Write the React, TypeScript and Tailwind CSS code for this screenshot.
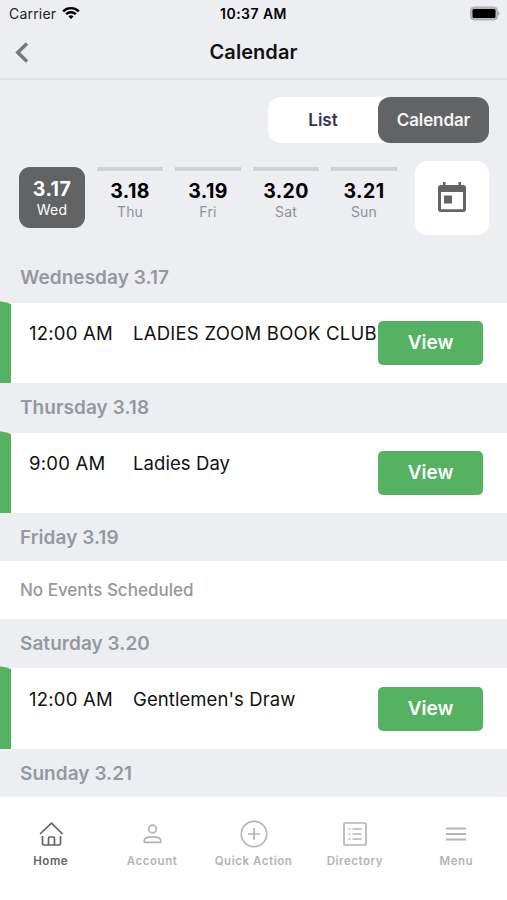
import React from "react";

const days = [
  { date: "3.18", day: "Thu" },
  { date: "3.19", day: "Fri" },
  { date: "3.20", day: "Sat" },
  { date: "3.21", day: "Sun" },
];

function SectionTitle({ children, className = "h-12 pt-[2px]" }: { children: React.ReactNode; className?: string }) {
  return (
    <h2 className={`flex items-center bg-[#edeef2] pl-5 text-[19px] font-semibold tracking-[0.05px] text-[#95989f] ${className}`}>
      {children}
    </h2>
  );
}

function EventRow({
  time,
  title,
  className = "h-[80px]",
  textClass = "pt-[18px]",
  titleClass = "tracking-[0.08px]",
  buttonClass = "mt-[18px] h-[44px]",
}: {
  time: string;
  title: string;
  className?: string;
  textClass?: string;
  titleClass?: string;
  buttonClass?: string;
}) {
  return (
    <div className={`flex bg-white ${className}`}>
      <svg className="-mt-[2px] h-[calc(100%+2px)] w-[11px] shrink-0" viewBox="0 0 11 83" preserveAspectRatio="none">
        <path d="M0 0.3Q5 1 11 3V83H0Z" fill="#55b263" />
      </svg>
      <div className={`flex w-[367px] shrink-0 pl-[18px] text-[18.5px] leading-6 whitespace-nowrap text-[#111] ${textClass}`}>
        <span className="w-[104px] shrink-0 tracking-[0.22px]">{time}</span>
        <span className={titleClass}>{title}</span>
      </div>
      <button className={`flex w-[105px] items-center justify-center rounded-[5px] bg-[#55b263] text-[19px] font-semibold text-white ${buttonClass}`}>
        View
      </button>
    </div>
  );
}

function NavItem({ label, active, children }: { label: string; active?: boolean; children: React.ReactNode }) {
  return (
    <div className={`flex flex-1 flex-col items-center ${active ? "text-[#626365]" : "text-[#b2b4b8]"}`}>
      <svg className="h-[30px] w-[30px]" viewBox="0 0 30 30" fill="none" stroke="currentColor" strokeWidth="1.7" strokeLinejoin="round">
        {children}
      </svg>
      <span className="mt-[4px] text-[11.5px] leading-4 font-semibold tracking-[0.55px] whitespace-nowrap">{label}</span>
    </div>
  );
}

export default function App() {
  return (
    <div className="flex h-[900px] w-[507px] flex-col overflow-hidden bg-[#edeef2] font-['Inter',sans-serif] text-black">
      <div className="grid h-[28px] shrink-0 grid-cols-3 items-center px-[9px] pb-[2px] text-[14px]">
        <div className="flex items-center gap-[6px]">
          <span className="tracking-[0.2px] text-[#222]">Carrier</span>
          <svg className="-mt-[1px] h-[14px] w-[18px]" viewBox="0 0 19 14" fill="none" stroke="black" strokeWidth="2.5">
            <path d="M1.2 5.2C5.8 .8 13.2 .8 17.8 5.2" />
            <path d="M4.3 8.3C7.3 5.5 11.7 5.5 14.7 8.3" />
            <path d="M6.8 10.6C8.4 9.1 10.6 9.1 12.2 10.6L9.5 13.3Z" fill="black" stroke="none" />
          </svg>
        </div>
        <span className="text-center font-semibold tracking-[0.45px]">10:37 AM</span>
        <svg className="-mr-[2px] h-[15px] w-[31px] justify-self-end" viewBox="0 0 31 15">
          <rect x="1.5" y="1" width="27" height="13" rx="3.5" fill="#b7b8ba" stroke="#aaabad" />
          <rect x="3.5" y="3" width="23" height="9" rx="1.5" fill="black" />
          <path d="M29 5.2Q32 7.5 29 9.8Z" fill="#aaabad" />
        </svg>
      </div>
      <header className="grid h-[52px] shrink-0 grid-cols-3 items-center border-b-2 border-[#dfe0e3] px-[15px] pb-[2px]">
        <svg className="h-[21px] w-[14px]" viewBox="0 0 14 21" fill="none" stroke="#77787a" strokeWidth="3.5">
          <path d="M12 1.5L2.8 10.5L12 19.5" />
        </svg>
        <h1 className="text-center text-[20px] font-semibold tracking-[0.05px] text-[#111]">Calendar</h1>
      </header>
      <div className="flex h-[62px] shrink-0 justify-end pt-[17px] pr-[18px]">
        <div className="flex h-[46px] w-[221px] rounded-[13px] bg-white text-[17px] font-semibold">
          <button className="w-[110px] pt-px text-[#34344a]">List</button>
          <button className="w-[111px] rounded-[12px] bg-[#626365] pt-px tracking-[-0.1px] text-[#f5f5f6]">Calendar</button>
        </div>
      </div>
      <div className="flex h-[110px] shrink-0 pt-[18px] pl-[19px]">
        <div className="mt-[7px] flex h-[61px] w-[66px] flex-col items-center rounded-[11px] bg-[#626365] pt-[10px] text-white">
          <b className="text-[19.5px] leading-6 tracking-[0.4px]">3.17</b>
          <span className="text-[14px] leading-[18px] tracking-[0.2px]">Wed</span>
        </div>
        {days.map((d) => (
          <div key={d.date} className="mt-[7px] ml-[12px] flex h-[61px] w-[66px] flex-col items-center border-t-4 border-[#d0d2d6] pt-[8px]">
            <b className="text-[19.5px] leading-6 tracking-[0.4px]">{d.date}</b>
            <span className="text-[14px] leading-[18px] tracking-[0.2px] text-[#909196]">{d.day}</span>
          </div>
        ))}
        <button className="mt-px ml-[18px] flex h-[74px] w-[74px] items-center justify-center rounded-[12px] bg-white pb-[3px]">
          <svg className="h-[32px] w-[28px]" viewBox="0 0 28 32">
            <path fillRule="evenodd" d="M5 1H7.5V4H20.5V1H23V4H25Q28 4 28 7V28Q28 31 25 31H3Q0 31 0 28V7Q0 4 3 4H5ZM3 11V28.2H25V11Z" fill="#626365" />
            <rect x="6" y="14.5" width="8" height="8" fill="#626365" />
          </svg>
        </button>
      </div>
      <main className="flex shrink-0 flex-col">
        <SectionTitle className="h-[51px] pt-px">Wednesday 3.17</SectionTitle>
        <EventRow time="12:00 AM" title="LADIES ZOOM BOOK CLUB" titleClass="tracking-[0.24px]" />
        <SectionTitle className="h-[50px] pt-px">Thursday 3.18</SectionTitle>
        <EventRow time="9:00 AM" title="Ladies Day" />
        <SectionTitle>Friday 3.19</SectionTitle>
        <p className="flex h-[58px] items-center bg-white pt-px pl-5 text-[17px] font-medium text-[#95989f]">No Events Scheduled</p>
        <SectionTitle className="h-[49px] pt-px">Saturday 3.20</SectionTitle>
        <EventRow time="12:00 AM" title="Gentlemen's Draw" className="h-[81px]" textClass="pt-[19px]" buttonClass="mt-[19px] h-[44px]" />
        <SectionTitle>Sunday 3.21</SectionTitle>
      </main>
      <nav className="flex min-h-0 flex-1 bg-white pt-[22px]">
        <NavItem label="Home" active>
          <path d="M4.5 14.5L15.5 4.2L26 14.5" strokeLinecap="round" />
          <path d="M6.5 17V24.5Q6.5 26 8 26H23Q24.5 26 24.5 24.5V17M12.5 26V19.5Q12.5 18 14 18H17Q18.5 18 18.5 19.5V26" />
        </NavItem>
        <NavItem label="Account">
          <circle cx="15.5" cy="10" r="3.8" />
          <path d="M7.3 23.4V21.5C7.3 19 11.5 17.9 15.5 17.9S23.7 19 23.7 21.5V23.4Z" />
        </NavItem>
        <NavItem label="Quick Action">
          <circle cx="15" cy="15" r="12.7" />
          <path d="M15 9V21M9 15H21" />
        </NavItem>
        <NavItem label="Directory">
          <rect x="4" y="4" width="22" height="22" rx="1" />
          <path d="M8.5 10H10.5M12.5 10H21.5M8.5 15H10.5M12.5 15H21.5M8.5 20H10.5M12.5 20H21.5" />
        </NavItem>
        <NavItem label="Menu">
          <path d="M5 9.5H25M5 15H25M5 20.5H25" strokeWidth="2" />
        </NavItem>
      </nav>
    </div>
  );
}
